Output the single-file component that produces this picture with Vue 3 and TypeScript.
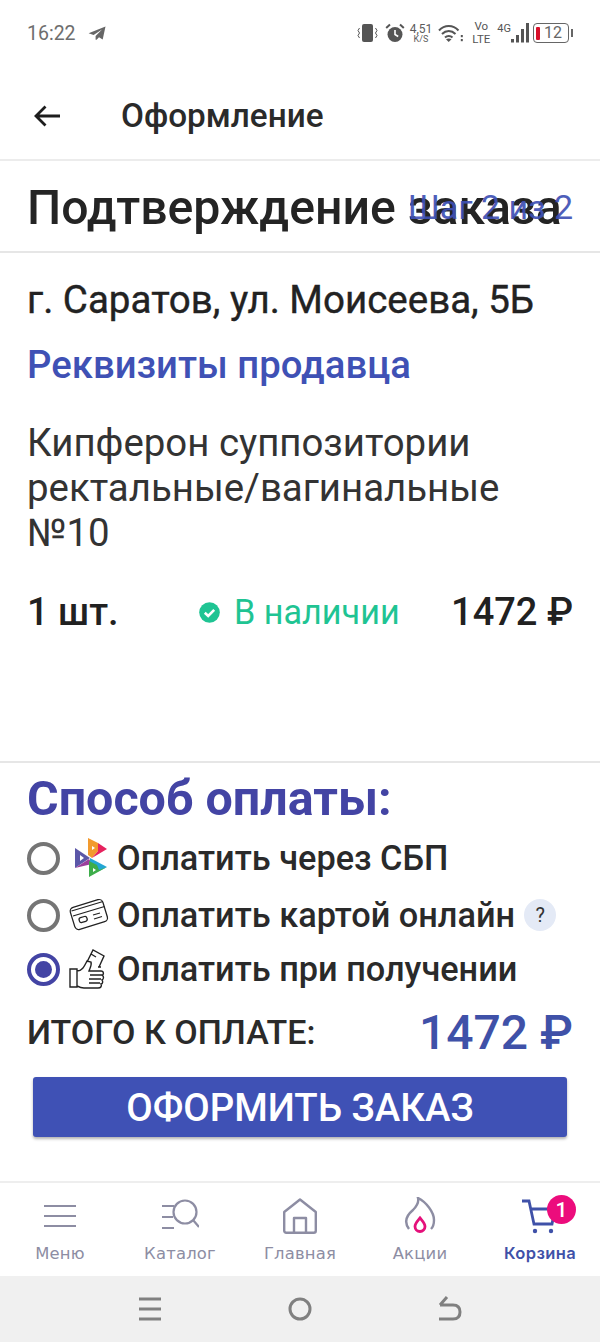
<script setup lang="ts">
const navItems = [
  { key: 'menu', label: 'Меню' },
  { key: 'catalog', label: 'Каталог' },
  { key: 'home', label: 'Главная' },
  { key: 'sale', label: 'Акции' },
  { key: 'cart', label: 'Корзина' },
]
</script>

<template>
  <div class="page">
    <div class="status">
      <span class="time">16:22</span>
      <svg class="tg" width="18" height="15" viewBox="0 0 18 15"><path d="M17.500 .5 .6 7.200l5 1.700L14 3.600 7.600 10v3.800l1-.1 2.400-2.500 3.700 2.200z" fill="#666"/></svg>
      <span class="grow"></span>
      <svg class="st-i" width="21" height="18" viewBox="0 0 21 18"><rect x="5" y="0" width="11" height="18" rx="2" fill="#555"/><path d="M2.500 4 1 6.500l1.500 2.500L1 11.500 2.500 14M18.500 4 20 6.500 18.500 9l1.500 2.500-1.500 2.500" stroke="#555" fill="none"/></svg>
      <svg class="st-i alarm" width="20" height="20" viewBox="0 0 20 20"><circle cx="10" cy="11.500" r="7.500" fill="#555"/><path d="M10 7v4.500l3.200 2" stroke="#fff" stroke-width="1.600" fill="none"/><path d="M1.200 5 5 1.500M18.800 5 15 1.500" stroke="#555" stroke-width="2"/></svg>
      <span class="speed"><b>4,51</b><i>K/S</i></span>
      <svg class="st-i wifi" width="25" height="19" viewBox="0 0 25 19"><path d="M1 6.500c5.500-6 14-6 19.500 0M4 10c4-4 9.500-4 13.500 0M7 13.500c2-2 5.500-2 7.500 0" stroke="#555" stroke-width="2" fill="none"/><path d="M10.700 18 8 15.300c1.500-1 4-1 5.500 0z" fill="#555"/><rect x="22.800" y="11" width="2" height="2.200" fill="#555"/><rect x="22.800" y="15" width="2" height="2.200" fill="#555"/></svg>
      <span class="volte"><b>Vo</b><b>LTE</b></span>
      <span class="fourg">4G</span>
      <svg class="bars" width="18" height="20" viewBox="0 0 18 20"><rect x="0" y="16" width="3" height="3.500" fill="#555"/><rect x="5" y="12" width="3" height="7.500" fill="#555"/><rect x="10" y="6" width="3" height="13.500" fill="#555"/><rect x="15" y="0" width="3" height="19.500" fill="#555"/></svg>
      <span class="battery"><i class="level"></i><span>12</span></span>
      <i class="nub"></i>
    </div>

    <header class="appbar">
      <svg class="back" width="28" height="24" viewBox="0 0 28 24"><path d="M27 12H3M12.500 2.500 3 12l9.500 9.500" stroke="#1d1d1d" stroke-width="2.800" fill="none"/></svg>
      <h2 class="appbar-title">Оформление</h2>
    </header>

    <section class="title-row">
      <h1 class="title">Подтверждение заказа</h1>
      <span class="step">Шаг 2 из 2</span>
    </section>

    <section class="order">
      <p class="address">г. Саратов, ул. Моисеева, 5Б</p>
      <a class="seller">Реквизиты продавца</a>
      <p class="product">Кипферон суппозитории ректальные/вагинальные №10</p>
      <div class="line">
        <span class="qty">1 шт.</span>
        <span class="stock">
          <svg width="21" height="21" viewBox="0 0 21 21"><circle cx="10.500" cy="10.500" r="10.300" fill="#1fc493"/><path d="M5.800 10.800l3.400 3.200 6-6.200" stroke="#fff" stroke-width="2.600" fill="none"/></svg>
          В наличии
        </span>
        <span class="price">1472 ₽</span>
      </div>
    </section>

    <section class="pay">
      <h3 class="pay-title">Способ оплаты:</h3>
      <div class="opt o1">
        <i class="radio"></i>
        <svg class="opt-i" width="34" height="40" viewBox="0 0 34 40">
          <path d="M1 10 16 20 1 30z" fill="#5b57a8"/><path d="M6 17v6l4-3z" fill="#fff"/>
          <path d="M1 30 15 21l3 5z" fill="#9a3f9b"/>
          <path d="M14 0l10 5v8l-6 7-4-3z" fill="#f29a2e"/><path d="M18 8v4l3-2z" fill="#fff"/>
          <path d="M24 5l9 6-15 9 6-7z" fill="#e6225e"/>
          <path d="M16 20l17 9-8 4-9-7z" fill="#23a6d5"/>
          <path d="M15 39V23l8 4 2 5 8-3z" fill="#3dad4a"/><path d="M19 30v4l3-2z" fill="#fff"/>
        </svg>
        <span>Оплатить через СБП</span>
      </div>
      <div class="opt o2">
        <i class="radio"></i>
        <svg class="opt-i" width="40" height="36" viewBox="0 0 40 36" fill="none" stroke="#222" stroke-width="1.300"><rect x="3" y="6" width="34" height="23" rx="4" transform="rotate(-17 20 18)"/><path d="M2.500 14 34 4.500M4 19 35.500 9.500"/><rect x="10" y="20" width="8" height="5" rx="2" transform="rotate(-17 14 22)"/><path d="M24 18l7-2M25 22l8-2.500"/></svg>
        <span>Оплатить картой онлайн</span>
        <i class="help">?</i>
      </div>
      <div class="opt o3">
        <i class="radio on"></i>
        <svg class="opt-i" width="40" height="42" viewBox="0 0 40 42" fill="none" stroke="#222" stroke-width="1.400"><path d="M1 21h7v18H1zM8 23c5 0 7-4 10-10l4 1c1 3-1 6-2 9h12c3 0 3 4 1 4 2 1 2 4 0 5 1 1 1 4-1 4 1 2 0 4-3 4H15c-3 0-5-1-7-2"/><path d="M18 14 24 2l11 6-5 11M22 6l5 3M29 19h3"/><path d="M21 27h12M20 31h12M20 35h11"/></svg>
        <span>Оплатить при получении</span>
      </div>
      <div class="total">
        <span class="total-label">ИТОГО К ОПЛАТЕ:</span>
        <span class="total-sum">1472 ₽</span>
      </div>
      <button class="submit">ОФОРМИТЬ ЗАКАЗ</button>
    </section>

    <nav class="tabs">
      <div v-for="n in navItems" :key="n.key" class="tab" :class="{ active: n.key === 'cart' }">
        <span class="tab-icon">
          <svg v-if="n.key === 'menu'" width="34" height="34" viewBox="0 0 34 34" stroke="#8d8da3" stroke-width="2.200"><path d="M1 7h32M1 17h32M1 27h32"/></svg>
          <svg v-else-if="n.key === 'catalog'" width="38" height="34" viewBox="0 0 38 34" fill="none" stroke="#8d8da3" stroke-width="2.200"><circle cx="24" cy="13" r="11.500"/><path d="M32 21l6 7M1 7h12M1 18h11M1 29h12"/></svg>
          <svg v-else-if="n.key === 'home'" width="34" height="36" viewBox="0 0 34 36" fill="none" stroke="#8d8da3" stroke-width="2.400" stroke-linejoin="round"><path d="M1.200 14 17 1.500 32.800 14v18.800a2 2 0 0 1-2 2H3.200a2 2 0 0 1-2-2z"/><path d="M11 35V20h12v15"/></svg>
          <svg v-else-if="n.key === 'sale'" width="32" height="38" viewBox="0 0 32 38" fill="none"><path d="M5 32C-1 24 3 18 9 13c5-5 6-8 5-12 8 4 16 14 16 22 0 4-1 7-3 9" stroke="#8d8da3" stroke-width="2.400"/><path d="M16 21c2.500 3 5 5.500 5 8.500a5 5 0 0 1-10 0c0-3 2.500-5.500 5-8.500z" stroke="#e5107a" stroke-width="2.800"/></svg>
          <svg v-else width="36" height="36" viewBox="0 0 36 36" fill="none" stroke="#3f51a8" stroke-width="2.800"><path d="M0 3h7l5 23h18l3-15H9"/><circle cx="13" cy="33" r="2.200" fill="#3f51a8" stroke="none"/><circle cx="29" cy="33" r="2.200" fill="#3f51a8" stroke="none"/></svg>
          <b v-if="n.key === 'cart'" class="badge">1</b>
        </span>
        <span class="tab-label">{{ n.label }}</span>
      </div>
    </nav>

    <div class="sysnav">
      <svg width="22" height="26" viewBox="0 0 22 26" stroke="#808080" stroke-width="3"><path d="M0 3h22M0 13h22M0 23h22"/></svg>
      <svg width="24" height="24" viewBox="0 0 24 24" fill="none" stroke="#808080" stroke-width="3"><circle cx="12" cy="12" r="10"/></svg>
      <svg width="24" height="26" viewBox="0 0 24 26" fill="none" stroke="#808080" stroke-width="3"><path d="M1 23h14c5 0 7-3 7-7s-2-7-7-7H2M9 1 2 9"/></svg>
    </div>
  </div>
</template>

<style>
html, body { margin: 0; background: #fff; }
</style>

<style scoped>
.page { width: 600px; height: 1342px; display: flex; flex-direction: column; background: #fff; font-family: Roboto, "Liberation Sans", sans-serif; color: #212121; overflow: hidden; }
.status { height: 66px; flex: none; display: flex; align-items: center; padding: 0 27px; box-sizing: border-box; color: #666; }
.time { font-size: 19.500px; color: #6e6e6e; }
.tg { margin-left: 12px; }
.grow { flex: 1; }
.st-i { margin-right: 7px; flex: none; }
.alarm { margin-right: 5px; }
.speed { display: flex; flex-direction: column; align-items: center; font-size: 12px; line-height: 12px; color: #5c5c5c; margin-right: 6px; }
.speed b, .volte b { font-weight: 400; }
.speed i { font-style: normal; font-size: 9px; line-height: 9px; }
.volte { display: flex; flex-direction: column; align-items: center; font-size: 11.500px; line-height: 13px; color: #555; margin: 0 7px 0 2px; }
.fourg { font-size: 11px; line-height: 13px; align-self: flex-start; margin-top: 22px; color: #555; }
.bars { margin-right: 4px; }
.battery { width: 36px; height: 20px; box-sizing: border-box; border: 1.500px solid #666; border-radius: 4px; display: flex; align-items: center; font-size: 16px; line-height: 1; color: #666; padding-left: 2px; gap: 4px; }
.level { width: 4px; height: 13px; background: #d8102a; border-radius: 1px; }
.nub { width: 2px; height: 8px; background: #666; margin-left: 2px; }

.appbar { height: 95px; flex: none; display: flex; align-items: center; box-sizing: border-box; padding: 6px 0 0 33px; border-bottom: 2px solid #ececec; }
.appbar-title { margin: 0 0 0 60px; font-size: 33.300px; font-weight: 500; line-height: 1.2; color: #2a2a2a; }

.title-row { height: 92px; flex: none; position: relative; display: flex; align-items: center; box-sizing: border-box; padding: 0 27px; border-bottom: 2px solid #e6e6e6; }
.title { margin: 0; font-size: 48.200px; font-weight: 500; line-height: 1.2; color: #242424; white-space: nowrap; padding-top: 3px; }
.step { position: absolute; right: 27px; top: 26px; font-size: 34px; line-height: 1.2; color: #3f51b5; opacity: .92; }

.order { height: 510px; flex: none; box-sizing: border-box; padding: 25px 27px 0; border-bottom: 2px solid #e6e6e6; display: flex; flex-direction: column; }
.address { margin: 0; font-size: 38.500px; font-weight: 400; -webkit-text-stroke: .4px #222; line-height: 44px; color: #222; white-space: nowrap; }
.seller { margin-top: 21px; font-size: 38.300px; font-weight: 500; line-height: 44px; color: #3f51b5; }
.product { margin: 33px 0 0; font-size: 38.400px; line-height: 45px; color: #333; }
.line { margin-top: 35px; display: flex; align-items: center; height: 44px; }
.qty { font-size: 38px; font-weight: 500; width: 172px; }
.stock { display: flex; align-items: center; gap: 14px; font-size: 34.200px; color: #1fc493; flex: 1; }
.price { font-size: 38px; font-weight: 500; }

.pay { flex: 1; padding: 9px 27px 0; box-sizing: border-box; display: flex; flex-direction: column; }
.pay-title { margin: 0; font-size: 48.400px; font-weight: 700; line-height: 54px; color: #4344a4; }
.opt { display: flex; align-items: center; font-size: 34.300px; font-weight: 500; color: #2a2a2a; white-space: nowrap; height: 50px; }
.o1 { margin-top: 7px; }
.o2 { margin-top: 7px; }
.o3 { margin-top: 4px; }
.radio { width: 33px; height: 33px; box-sizing: border-box; border: 4px solid #757575; border-radius: 50%; flex: none; position: relative; }
.radio.on { border-color: #4344a4; }
.radio.on::after { content: ""; position: absolute; inset: 4px; border-radius: 50%; background: #4344a4; }
.opt-i { flex: none; margin-left: 9px; margin-right: 8px; }
.o1 .opt-i { margin-left: 14px; margin-right: 9px; }
.help { font-style: normal; width: 32px; height: 32px; margin-left: 9px; border-radius: 50%; background: #e4eaf6; display: flex; align-items: center; justify-content: center; font-size: 20px; font-weight: 400; color: #333; }
.total { display: flex; justify-content: space-between; align-items: center; height: 60px; margin-top: 8px; }
.total-label { font-size: 34px; font-weight: 500; color: #2a2a2a; }
.total-sum { font-size: 48px; font-weight: 500; color: #3f51a8; }
.submit { margin: 15px 6px 0; height: 60px; border: 0; border-radius: 3px; background: #3f51b5; color: #fff; font-family: inherit; font-size: 38.400px; font-weight: 500; box-shadow: 0 2px 3px rgba(0,0,0,.3); padding: 0; }

.tabs { height: 95px; flex: none; display: grid; grid-template-columns: repeat(5, 120px); border-top: 2px solid #eee; box-sizing: border-box; padding-top: 14px; }
.tab { display: flex; flex-direction: column; align-items: center; }
.tab-icon { height: 38px; position: relative; display: flex; align-items: center; justify-content: center; }
.tab-label { margin-top: 8px; font-family: "DejaVu Sans", sans-serif; font-size: 16.400px; line-height: 21px; letter-spacing: .2px; color: #8d8da3; }
.active .tab-label { font-family: Inter, sans-serif; font-size: 16.500px; color: #3f51a8; font-weight: 600; letter-spacing: .4px; }
.badge { position: absolute; left: 25px; top: -2px; width: 29px; height: 29px; border-radius: 50%; background: #ec0c7c; color: #fff; font-size: 21px; display: flex; align-items: center; justify-content: center; font-weight: 500; }

.sysnav { height: 66px; flex: none; background: #f0f0f0; display: grid; grid-template-columns: repeat(3, 150px); justify-content: center; justify-items: center; align-items: center; }
</style>
